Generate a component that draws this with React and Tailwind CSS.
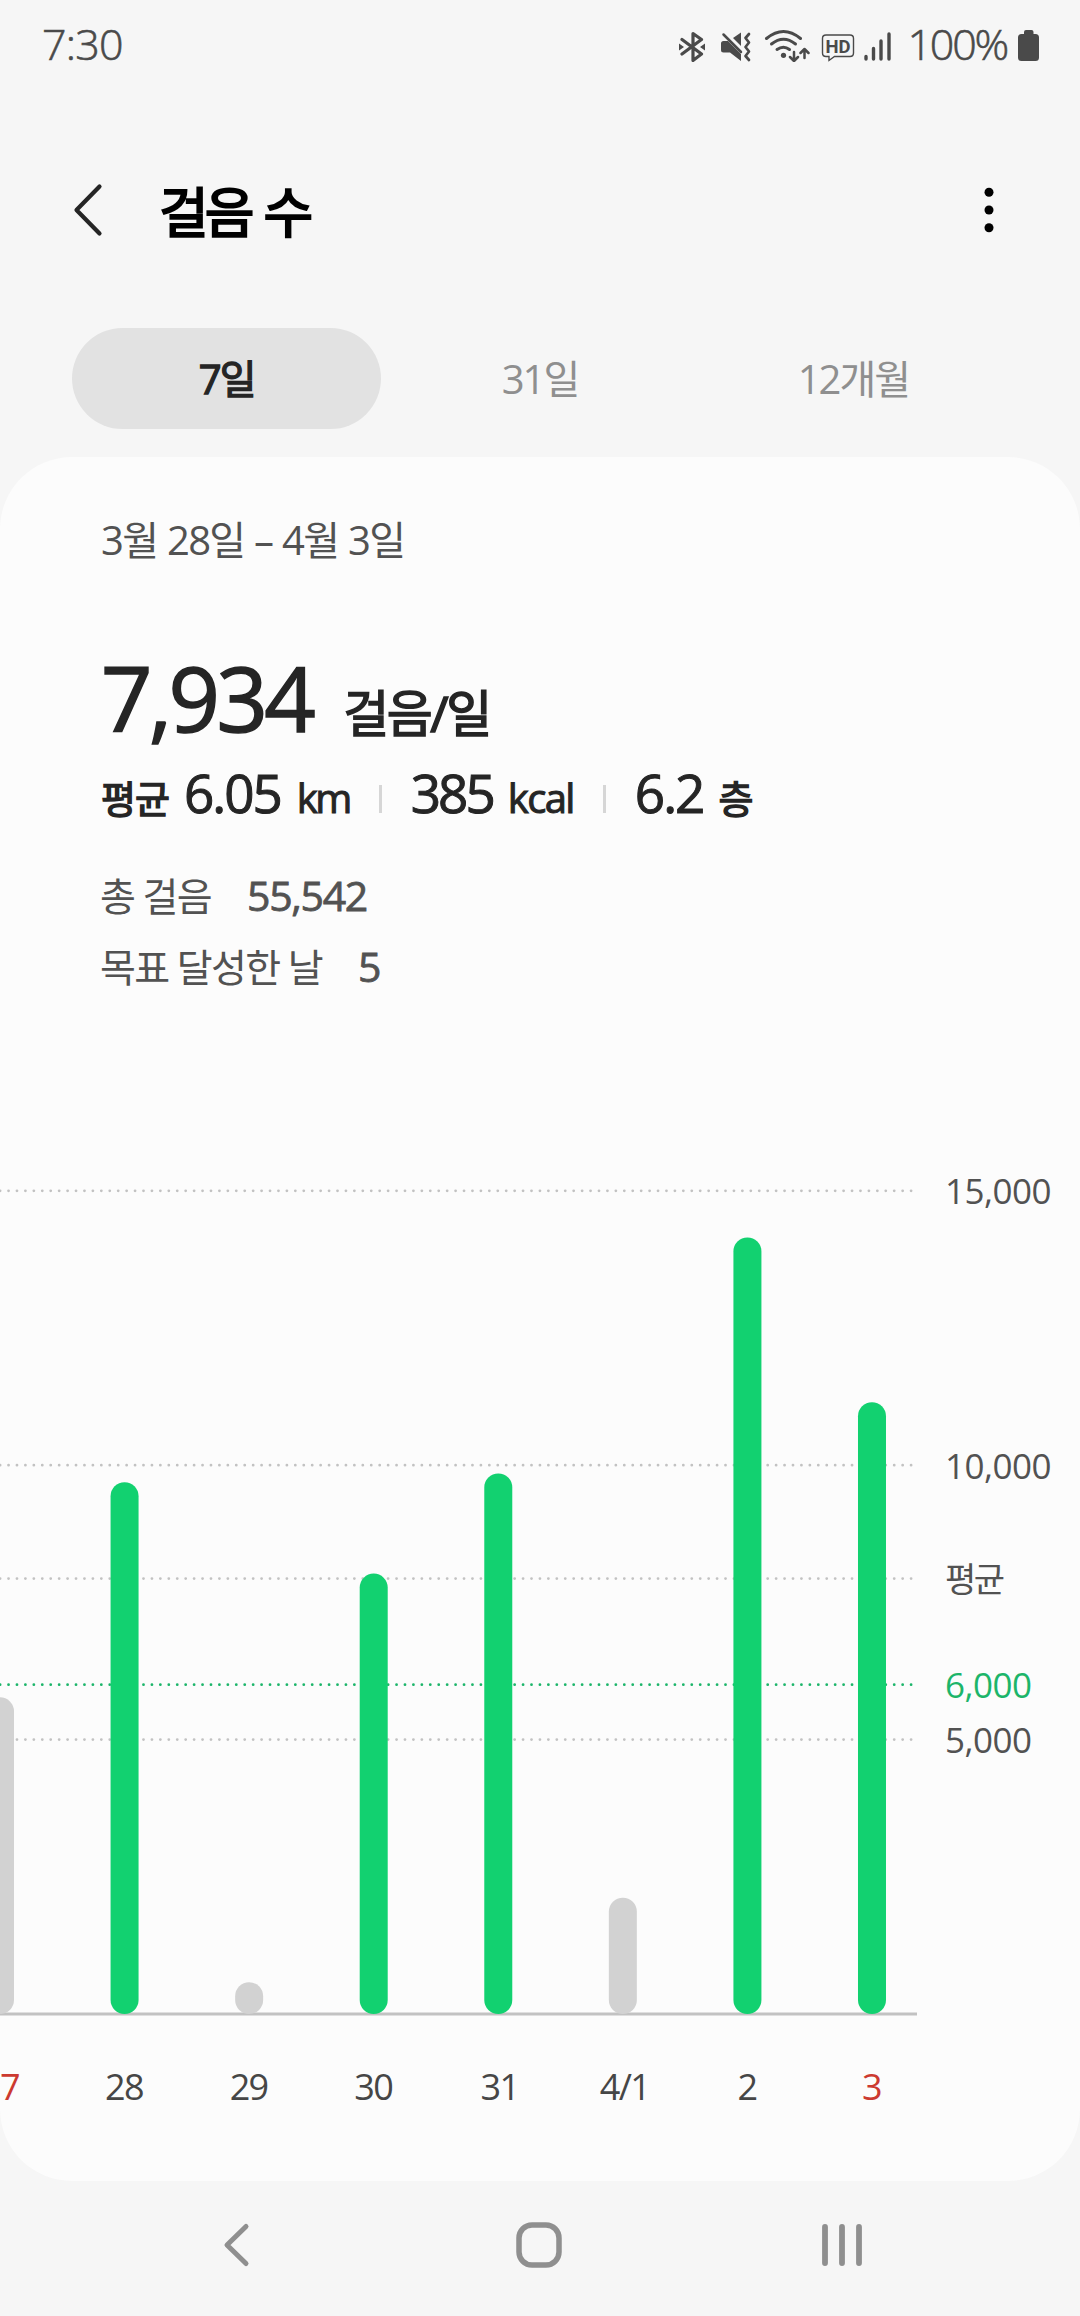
const GOAL = 6000
const AVERAGE = 7934

const days = [
  { label: '7', steps: 5770, sunday: true, labelX: 9.5 },
  { label: '28', steps: 9690 },
  { label: '29', steps: 580 },
  { label: '30', steps: 8025 },
  { label: '31', steps: 9850, labelX: 499.5 },
  { label: '4/1', steps: 2120, labelX: 624.5 },
  { label: '2', steps: 14150 },
  { label: '3', steps: 11147, sunday: true },
]

const gridLines = [
  { value: 15000, label: '15,000' },
  { value: 10000, label: '10,000' },
  { value: AVERAGE, label: '평균', korean: true },
  { value: GOAL, label: '6,000', goal: true },
  { value: 5000, label: '5,000' },
]

const tabs = ['7일', '31일', '12개월']

// ── Chart geometry ────────────────────────────────────────────────────────────
const BASE_Y = 874
const PX_PER_STEP = 0.05488
const DAY_WIDTH = 124.57
const BAR_WIDTH = 28

const yFor = (value) => BASE_Y - value * PX_PER_STEP

function StatusBar() {
  return (
    <div className="flex h-[90px] items-center justify-between pl-[42px] pr-[41px] text-[43px] font-light text-[#4a4a4a] [-webkit-text-stroke:0.6px]">
      <span className="pb-0.5 tracking-[-0.8px]">7:30</span>
      <div className="flex items-center">
        <svg className="h-[34px] w-[340px]" viewBox="670 28 340 34" fill="none" stroke="currentColor">
          {/* Bluetooth */}
          <g strokeWidth="3.200" strokeLinecap="round" strokeLinejoin="round">
            <path d="M682 39.500L701.500 54L693 60.500V33.500L701.500 39.500L682 54" />
          </g>
          <path d="M679 43.500V50.500L684 47ZM705 43.500V50.500L700 47Z" fill="currentColor" stroke="none" />
          {/* Muted, vibrate */}
          <path d="M721 43.500Q721 41 723.500 41H728L741 54V61L730 52.500H723.500Q721 52.500 721 50ZM733 38L741 32.500V46Z" fill="currentColor" stroke="none" />
          <path d="M723.500 34.500L741 52" strokeWidth="2.500" strokeLinecap="round" />
          <path d="M749 34L745.500 38L749 42.500L745.500 47L749 51.500L745.500 56L749 60" strokeWidth="2.700" strokeLinecap="round" strokeLinejoin="round" />
          {/* Wi-Fi */}
          <g strokeWidth="3" strokeLinecap="round">
            <path d="M766.500 38.500Q783.500 24.500 800.500 38.500" />
            <path d="M771.500 44Q783.500 34.500 795.500 44" />
            <path d="M777 49.500Q783.500 45 789.500 49.500" />
          </g>
          <circle cx="783.500" cy="55.300" r="2.600" fill="currentColor" stroke="none" />
          <path d="M794 52V61M790 57L794 61L798 57M804.500 58V49M800.500 53L804.500 49L808.500 53" strokeWidth="2.500" strokeLinecap="round" strokeLinejoin="round" />
          {/* HD voice */}
          <path d="M826 35H850Q853.500 35 853.500 38.500V53Q853.500 56.500 850 56.500H834.500L829 60.500V56.500H826Q822.500 56.500 822.500 53V38.500Q822.500 35 826 35Z" strokeWidth="1.400" />
          <text x="838" y="52.500" textAnchor="middle" fill="currentColor" stroke="none" className="font-['Roboto'] text-[18.5px] font-bold">HD</text>
          {/* Signal */}
          <path d="M866 56.500V59M873.500 48.500V59M881 41V59M889 34V59" strokeWidth="3.400" strokeLinecap="round" />
        </svg>
        <span className="-ml-[109px] w-[106px] pb-0.5 text-right tracking-[-2.2px]">100%</span>
        <svg className="ml-[11px] h-[31px] w-[21px]" viewBox="0 0 21 31" fill="currentColor">
          <path d="M6 2Q6 0 8 0H13.500Q15.500 0 15.500 2V4H17.500Q21 4 21 7.500V27.500Q21 31 17.500 31H3.500Q0 31 0 27.500V7.500Q0 4 3.500 4H6Z" />
        </svg>
      </div>
    </div>
  )
}

function Header() {
  return (
    <header className="flex h-[238px] items-start pl-[72px] pr-[86px] pt-[88px]">
      <svg className="mt-[5px] h-[56px] w-8" viewBox="0 0 32 56" fill="none" stroke="#252525" strokeWidth="4.200" strokeLinecap="round" strokeLinejoin="round">
        <path d="M27.500 3.500L4.500 27L27.500 50.500" />
      </svg>
      <h1 className="ml-[55px] text-[54px] leading-[68px] tracking-[-4px] text-black [-webkit-text-stroke:2px] [word-spacing:3px]">걸음 수</h1>
      <svg className="ml-auto mt-[8px] h-[48px] w-[10px]" viewBox="0 0 10 48">
        <circle cx="5" cy="6.300" r="4.500" />
        <circle cx="5" cy="24" r="4.500" />
        <circle cx="5" cy="41.700" r="4.500" />
      </svg>
    </header>
  )
}

function Tabs() {
  return (
    <nav className="grid h-[101px] grid-cols-3 gap-1 px-[72px] text-[40px] tracking-[-2px]">
      {tabs.map((tab, i) => (
        <button
          key={tab}
          className={
            i === 0
              ? 'rounded-full bg-[#e2e2e2] text-[#252525] [-webkit-text-stroke:1.3px]'
              : 'rounded-full text-[#8f8f8f]'
          }
        >
          {tab}
        </button>
      ))}
    </nav>
  )
}

function Divider() {
  return <i className="mx-[29px] h-7 w-[3px] bg-[#d6d6d6]" />
}

function Summary() {
  return (
    <section className="flex flex-col px-[101px] pt-[53px]">
      <p className="h-[60px] text-[40px] leading-[60px] tracking-[-1.7px] text-[#525252] [word-spacing:1px]">3월 28일 – 4월 3일</p>

      <div className="mt-[67px] flex h-[120px] items-baseline text-[#252525] [-webkit-text-stroke:1.5px]">
        <span className="text-[90px] leading-[120px] tracking-[-3.6px]">7,934</span>
        <span className="ml-[31px] text-[50px] tracking-[-2.4px]">걸음/일</span>
      </div>

      <div className="mt-px flex h-[70px] items-baseline leading-[70px] text-[#252525] [-webkit-text-stroke:1px]">
        <span className="text-[38px] tracking-[-1px] [-webkit-text-stroke:1.4px]">평균</span>
        <span className="ml-[15px] text-[53px] tracking-[-2px]">6.05</span>
        <span className="ml-4 text-[40px] tracking-[-2.5px]">km</span>
        <Divider />
        <span className="text-[53px] tracking-[-3px]">385</span>
        <span className="ml-[15px] text-[40px] tracking-[-1.6px]">kcal</span>
        <Divider />
        <span className="text-[53px] tracking-[-2px]">6.2</span>
        <span className="ml-[15px] text-[38px] tracking-[-2px] [-webkit-text-stroke:1.4px]">층</span>
      </div>

      <dl className="-ml-px mt-8 text-[39px] leading-[70px] tracking-[-1.7px] text-[#525252]">
        <div className="flex items-baseline gap-9">
          <dt>총 걸음</dt>
          <dd className="text-[41px] tracking-[-1.3px] [-webkit-text-stroke:0.8px]">55,542</dd>
        </div>
        <div className="flex items-baseline gap-9">
          <dt>목표 달성한 날</dt>
          <dd className="text-[41px] [-webkit-text-stroke:0.8px]">5</dd>
        </div>
      </dl>
    </section>
  )
}

function StepChart() {
  return (
    <svg className="mt-auto block h-[1041px] w-full" viewBox="0 0 1080 1041">
      {gridLines.map(({ value, label, goal, korean }) => (
        <g key={value}>
          <line
            x1="0.100"
            x2="914"
            y1={yFor(value)}
            y2={yFor(value)}
            stroke={goal ? '#1cb56a' : '#c2c2c2'}
            strokeWidth="2.800"
            strokeLinecap="round"
            strokeDasharray="0.01 8.425"
          />
          <text
            x="945"
            y={yFor(value) + 13.5}
            fill={goal ? '#1cb56a' : '#525252'}
            className={korean ? 'text-[34px] tracking-[-2.5px]' : 'text-[35px] tracking-[-0.5px]'}
          >
            {label}
          </text>
        </g>
      ))}

      <line x1="0" x2="917" y1={BASE_Y} y2={BASE_Y} stroke="#c2c2c2" strokeWidth="3" />

      {days.map(({ label, steps, sunday, labelX }, i) => {
        const x = i * DAY_WIDTH
        return (
          <g key={label}>
            <rect
              x={x - BAR_WIDTH / 2}
              y={yFor(steps)}
              width={BAR_WIDTH}
              height={steps * PX_PER_STEP}
              rx={BAR_WIDTH / 2}
              fill={steps >= GOAL ? '#12d170' : '#d2d2d2'}
            />
            <text
              x={labelX ?? x - 0.5}
              y="960"
              textAnchor="middle"
              fill={sunday ? '#cc3a30' : '#464646'}
              className="text-[36px] tracking-[-1.6px]"
            >
              {label}
            </text>
          </g>
        )
      })}
    </svg>
  )
}

function NavigationBar() {
  return (
    <div className="flex h-[135px] items-center justify-between pb-[7px] pl-[222px] pr-[217px] text-[#8f8f8f]">
      <svg className="h-[46px] w-7" viewBox="0 0 28 46" fill="none" stroke="currentColor" strokeWidth="5" strokeLinecap="round" strokeLinejoin="round">
        <path d="M24 4.500L5 23L24 41.500" />
      </svg>
      <svg className="ml-1.5 h-[46px] w-[46px]" viewBox="0 0 46 46" fill="none" stroke="currentColor" strokeWidth="5.500">
        <rect x="3" y="3" width="40" height="40" rx="13" />
      </svg>
      <svg className="h-[46px] w-[42px]" viewBox="0 0 42 46" stroke="currentColor" strokeWidth="5.800" strokeLinecap="round">
        <path d="M4 5V41M21 5V41M38 5V41" />
      </svg>
    </div>
  )
}

export default function App() {
  return (
    <div className="flex h-[2316px] w-[1080px] flex-col overflow-hidden bg-[#f6f6f6] font-['Open_Sans','Noto_Sans_CJK_KR',sans-serif]">
      <StatusBar />
      <Header />
      <Tabs />
      <main className="mt-7 flex h-[1724px] flex-col rounded-[72px] bg-[#fcfcfc]">
        <Summary />
        <StepChart />
      </main>
      <NavigationBar />
    </div>
  )
}
